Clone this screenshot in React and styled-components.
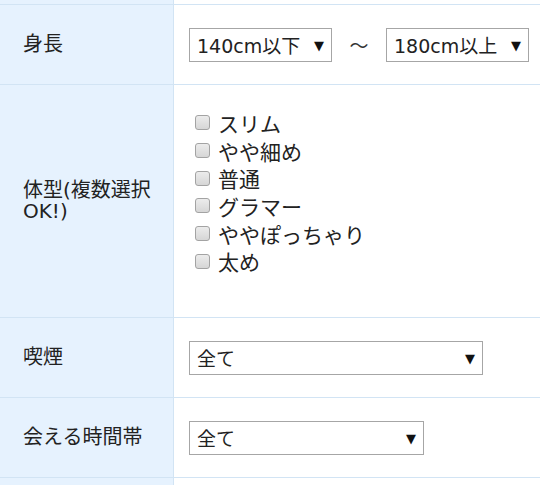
import React from "react";
import styled, { createGlobalStyle } from "styled-components";

const GlobalStyle = createGlobalStyle`
  html, body {
    margin: 0;
    padding: 0;
    background: #fff;
  }
  body {
    font-family: "DejaVu Sans", "Noto Sans CJK JP", sans-serif;
    color: #222;
  }
`;

const Table = styled.div`
  display: grid;
  grid-template-columns: 174px 1fr;
  width: 100%;
  overflow: hidden;
`;

const LabelCell = styled.div`
  display: flex;
  align-items: center;
  box-sizing: border-box;
  min-height: ${(p) => p.h}px;
  padding: 0 6px 0 23px;
  background: #e6f2fe;
  border-right: 1px solid #d2e4f4;
  border-bottom: 1px solid #d2e4f4;
  font-size: 20px;
  line-height: 21px;
`;

const ValueCell = styled.div`
  display: flex;
  align-items: ${(p) => (p.top ? "flex-start" : "center")};
  box-sizing: border-box;
  min-height: ${(p) => p.h}px;
  padding: ${(p) => (p.top ? "24px 15px 40px 21px" : "0 15px")};
  border-bottom: 1px solid #d2e4f4;
`;

const SelectBox = styled.div`
  position: relative;
  box-sizing: border-box;
  width: ${(p) => p.w}px;
  height: 34px;
  border: 1px solid #a6a6a6;
  background: #fff;
  display: flex;
  align-items: center;
  padding-left: 7px;
  font-size: 19px;
  white-space: nowrap;
`;

const Arrow = styled.span`
  position: absolute;
  right: 7px;
  top: 50%;
  transform: translateY(-50%);
  font-family: "DejaVu Sans", sans-serif;
  font-size: 13px;
  color: #111;
`;

const Tilde = styled.span`
  width: 54px;
  text-align: center;
  font-size: 19px;
  font-family: "Noto Sans CJK JP", sans-serif;
  color: #333;
`;

const CheckList = styled.div`
  display: flex;
  flex-direction: column;
`;

const CheckItem = styled.label`
  display: flex;
  align-items: center;
  height: 27.7px;
  font-size: 21px;
  font-family: "Noto Sans CJK JP", sans-serif;
`;

const Box = styled.input.attrs({ type: "checkbox" })`
  appearance: none;
  margin: 0 8px 0 0;
  width: 15px;
  height: 15px;
  box-sizing: border-box;
  border: 1px solid #a3a3a3;
  border-radius: 3px;
  background: linear-gradient(#ececec, #d6d6d6);
`;

const Select = ({ w, value }) => (
  <SelectBox w={w}>
    {value}
    <Arrow>▼</Arrow>
  </SelectBox>
);

const bodyTypes = ["スリム", "やや細め", "普通", "グラマー", "ややぽっちゃり", "太め"];

export default function App() {
  return (
    <>
      <GlobalStyle />
      <Table>
        <LabelCell h={5} />
        <ValueCell h={5} />

        <LabelCell h={80}>身長</LabelCell>
        <ValueCell h={80}>
          <Select w={143} value="140cm以下" />
          <Tilde>～</Tilde>
          <Select w={143} value="180cm以上" />
        </ValueCell>

        <LabelCell h={233}>
          <span>
            体型(複数選択
            <br />
            OK!)
          </span>
        </LabelCell>
        <ValueCell h={233} top>
          <CheckList>
            {bodyTypes.map((t) => (
              <CheckItem key={t}>
                <Box />
                {t}
              </CheckItem>
            ))}
          </CheckList>
        </ValueCell>

        <LabelCell h={80}>喫煙</LabelCell>
        <ValueCell h={80}>
          <Select w={294} value="全て" />
        </ValueCell>

        <LabelCell h={80}>会える時間帯</LabelCell>
        <ValueCell h={80}>
          <Select w={235} value="全て" />
        </ValueCell>

        <LabelCell h={40} />
        <ValueCell h={40} />
      </Table>
    </>
  );
}
